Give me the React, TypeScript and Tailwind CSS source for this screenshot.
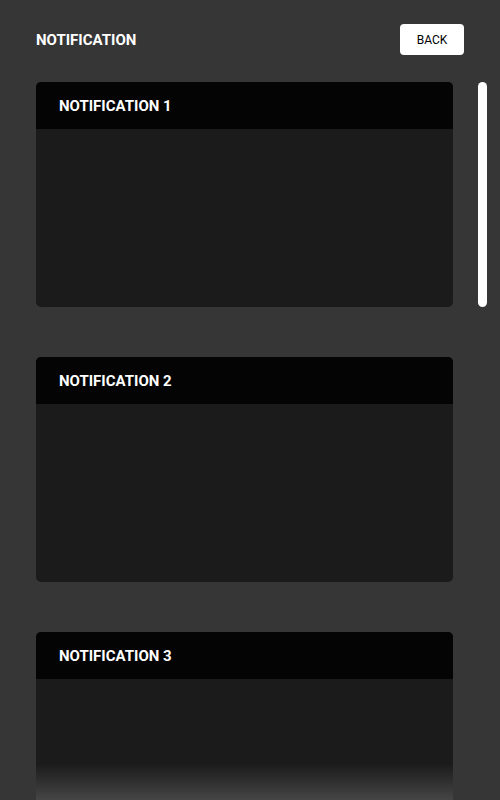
const notifications = ["NOTIFICATION 1", "NOTIFICATION 2", "NOTIFICATION 3"];

export default function App() {
  return (
    <div className="flex h-[800px] w-[500px] flex-col overflow-hidden bg-[#363636] font-['Roboto',sans-serif]">
      <header className="flex items-center justify-between px-9 pt-6">
        <h1 className="pt-px text-[15px] font-bold text-white">NOTIFICATION</h1>
        <button
          type="button"
          className="flex h-[31px] w-[64px] items-center justify-center rounded-[4px] bg-white text-[12px] text-black"
        >
          BACK
        </button>
      </header>

      <div className="mt-[27px] flex min-h-0 flex-1 pl-9">
        <div className="relative w-[417px] overflow-hidden">
          <div className="flex flex-col gap-[50px]">
            {notifications.map((title) => (
              <section key={title} className="flex h-[225px] shrink-0 flex-col overflow-hidden rounded-[5px] bg-[#1b1b1b]">
                <div className="flex h-[47px] shrink-0 items-center bg-[#040404] px-[23px] pt-px">
                  <h2 className="text-[15px] font-bold text-white">{title}</h2>
                </div>
                <div className="flex-1" />
              </section>
            ))}
          </div>
          <div className="pointer-events-none absolute inset-x-0 bottom-0 h-[36px] bg-gradient-to-b from-transparent to-[#4a4a4a]/90" />
        </div>
        <div className="ml-[25px] w-[9px] shrink-0">
          <div className="h-[225px] rounded-full bg-white" />
        </div>
      </div>
    </div>
  );
}
